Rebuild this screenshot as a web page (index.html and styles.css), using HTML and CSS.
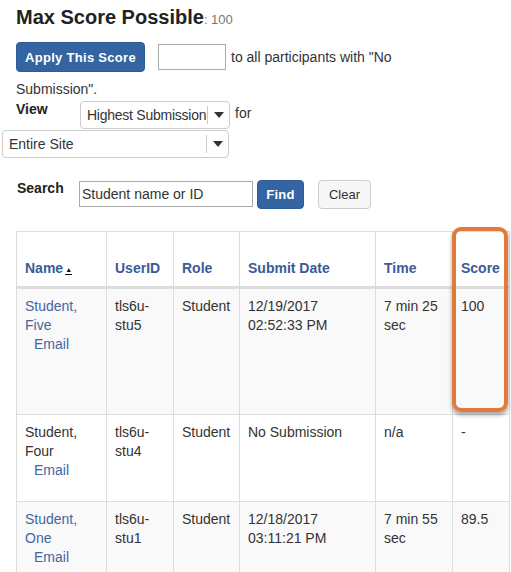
FILE: index.html
```html
<!DOCTYPE html>
<html>
<head>
<meta charset="utf-8">
<link rel="stylesheet" href="styles.css">
</head>
<body>
<div class="page">
  <h1 class="title">Max Score Possible<span class="max">: 100</span></h1>
  <div class="apply-row">
    <button class="btn btn-primary apply">Apply This Score</button>
    <input class="score-input" type="text">
    <span class="apply-text">to all participants with "No</span>
  </div>
  <div class="apply-wrap">Submission".</div>
  <div class="view-row">
    <span class="label view-label">View</span>
    <div class="select sel-view"><span class="sel-text">Highest Submission</span><span class="sel-arrow"></span></div>
    <span class="for">for</span>
  </div>
  <div class="select sel-site"><span class="sel-text">Entire Site</span><span class="sel-arrow"></span></div>
  <div class="search-row">
    <span class="label search-label">Search</span>
    <input class="search-input" type="text" value="Student name or ID">
    <button class="btn btn-primary find">Find</button>
    <button class="btn btn-default clear">Clear</button>
  </div>
  <div class="table-wrap">
    <table class="grid">
      <colgroup>
        <col class="c-name"><col class="c-user"><col class="c-role"><col class="c-date"><col class="c-time"><col class="c-score">
      </colgroup>
      <thead>
        <tr>
          <th>Name<span class="sort">&#9650;</span></th>
          <th>UserID</th>
          <th>Role</th>
          <th>Submit Date</th>
          <th>Time</th>
          <th>Score</th>
        </tr>
      </thead>
      <tbody>
        <tr class="odd r1">
          <td><a class="link">Student, Five</a><a class="link email">Email</a></td>
          <td>tls6u-<br>stu5</td>
          <td>Student</td>
          <td>12/19/2017<br>02:52:33 PM</td>
          <td>7 min 25<br>sec</td>
          <td>100</td>
        </tr>
        <tr class="r2">
          <td><span class="plain">Student, Four</span><a class="link email">Email</a></td>
          <td>tls6u-<br>stu4</td>
          <td>Student</td>
          <td>No Submission</td>
          <td>n/a</td>
          <td>-</td>
        </tr>
        <tr class="odd r3">
          <td><a class="link">Student, One</a><a class="link email">Email</a></td>
          <td>tls6u-<br>stu1</td>
          <td>Student</td>
          <td>12/18/2017<br>03:11:21 PM</td>
          <td>7 min 55<br>sec</td>
          <td>89.5</td>
        </tr>
      </tbody>
    </table>
    <div class="highlight"></div>
  </div>
</div>
</body>
</html>
```

FILE: styles.css
```css
html, body {
  margin: 0;
  padding: 0;
  background: #ffffff;
}
body {
  font-family: "Liberation Sans", Arial, sans-serif;
  font-size: 14px;
  color: #333333;
  overflow: hidden;
}
.page {
  padding: 0 0 0 2px;
  width: 509px;
}
.title {
  margin: 0 0 0 14px;
  padding-top: 5px;
  font-size: 20px;
  font-weight: bold;
  line-height: 24px;
  color: #222222;
}
.max {
  font-size: 13px;
  font-weight: normal;
  color: #777777;
}
.btn {
  font-family: "Liberation Sans", Arial, sans-serif;
  font-size: 13px;
  border-radius: 4px;
  box-sizing: border-box;
  padding: 0;
  cursor: pointer;
}
.btn-primary {
  background: #3465a2;
  border: 1px solid #2d5b94;
  color: #ffffff;
  font-weight: bold;
  letter-spacing: 0.3px;
}
.btn-default {
  background: #f7f7f7;
  border: 1px solid #cccccc;
  color: #333333;
}
.apply-row {
  display: flex;
  align-items: center;
  margin: 10px 0 0 14px;
  height: 30px;
}
.apply {
  width: 129px;
  height: 30px;
}
.score-input {
  width: 68px;
  height: 26px;
  box-sizing: border-box;
  border: 1px solid #aaaaaa;
  margin: 0 5px 0 13px;
  padding: 0;
}
.apply-text {
  line-height: 20px;
}
.apply-wrap {
  margin: 7px 0 0 14px;
  line-height: 20px;
}
.label {
  font-weight: bold;
  color: #222222;
}
.view-row {
  display: flex;
  align-items: flex-start;
  margin: 0 0 0 14px;
}
.view-label {
  width: 64px;
  line-height: 16px;
  padding-top: 2px;
}
.select {
  display: flex;
  align-items: center;
  box-sizing: border-box;
  border: 1px solid #cccccc;
  border-radius: 4px;
  height: 28px;
  background: #ffffff;
  white-space: nowrap;
  overflow: hidden;
}
.sel-text {
  flex: 1;
  padding-left: 6px;
  overflow: hidden;
}
.sel-view .sel-text {
  letter-spacing: -0.25px;
}
.sel-arrow {
  flex: none;
  width: 21px;
  height: 18px;
  border-left: 1px solid #cccccc;
  display: flex;
  align-items: center;
  justify-content: center;
}
.sel-arrow::after {
  content: "";
  border-left: 5px solid transparent;
  border-right: 5px solid transparent;
  border-top: 6px solid #333333;
}
.sel-view {
  width: 150px;
  margin-top: 2px;
}
.for {
  margin-left: 5px;
  line-height: 24px;
  padding-top: 2px;
}
.sel-site {
  width: 227px;
  margin-top: 1px;
}
.search-row {
  display: flex;
  align-items: flex-start;
  margin: 22px 0 0 15px;
}
.search-label {
  width: 62px;
  line-height: 16px;
}
.search-input {
  width: 174px;
  height: 26px;
  box-sizing: border-box;
  border: 1px solid #aaaaaa;
  margin-top: 1px;
  padding: 0 2px;
  font-family: "Liberation Sans", Arial, sans-serif;
  font-size: 14px;
  color: #333333;
}
.find {
  width: 47px;
  height: 29px;
  margin-left: 4px;
}
.clear {
  width: 53px;
  height: 29px;
  margin-left: 14px;
}
.table-wrap {
  position: relative;
  margin: 22px 0 0 14px;
}
.grid {
  border-collapse: collapse;
  table-layout: fixed;
  width: 493px;
}
.c-name { width: 90px; }
.c-user { width: 67px; }
.c-role { width: 66px; }
.c-date { width: 136px; }
.c-time { width: 77px; }
.c-score { width: 57px; }
.grid th, .grid td {
  border: 1px solid #dddddd;
  text-align: left;
  padding: 8px 8px;
  line-height: 19px;
}
.grid th {
  height: 38px;
  vertical-align: bottom;
  color: #3b5b96;
  font-weight: bold;
  border-bottom: 3px solid #dddddd;
}
.grid td {
  vertical-align: top;
}
.sort {
  font-size: 7px;
  color: #111111;
  border-bottom: 1px solid #111111;
  margin-left: 2px;
  vertical-align: 1px;
  line-height: 8px;
  display: inline-block;
}
.odd td {
  background: #f9f9f9;
}
.r1 td { height: 109px; }
.r2 td { height: 70px; }
.r3 td { height: 70px; }
.link {
  color: #4466a0;
  text-decoration: none;
  display: block;
}
.plain {
  display: block;
}
.email {
  padding-left: 9px;
}
.highlight {
  position: absolute;
  left: 436px;
  top: -4px;
  width: 56px;
  height: 185px;
  box-sizing: border-box;
  border: 4px solid #e07b39;
  border-radius: 9px;
  box-shadow: 0 3px 4px rgba(0, 0, 0, 0.35);
}
```
